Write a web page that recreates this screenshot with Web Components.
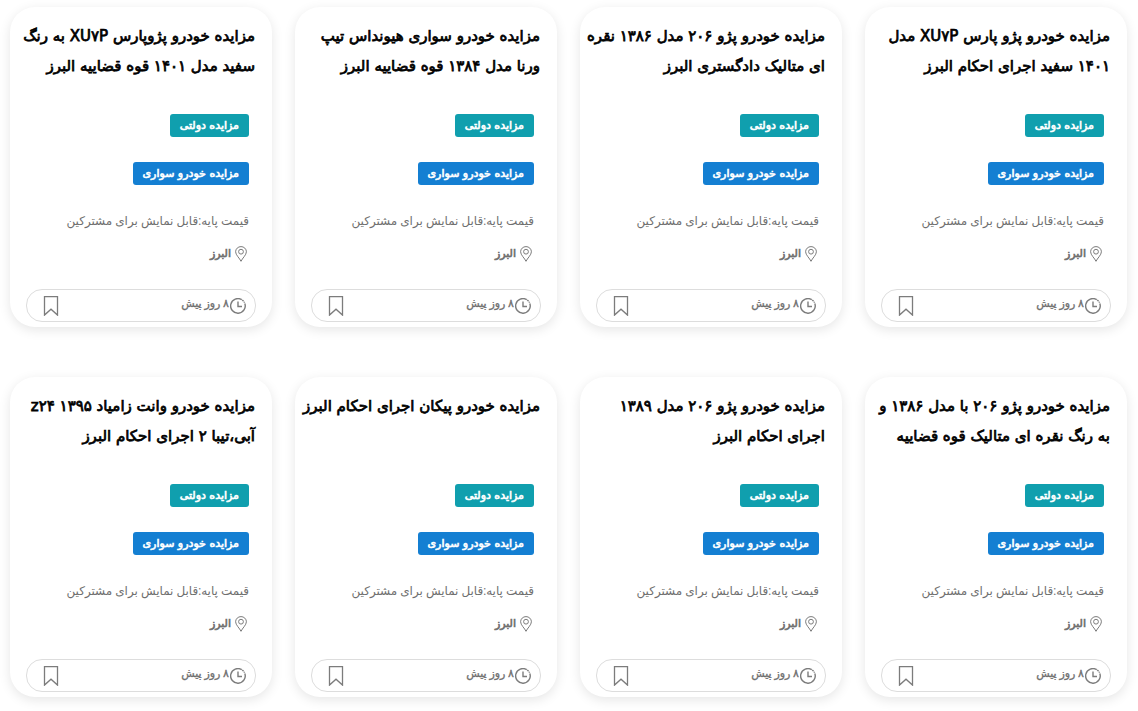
<!DOCTYPE html>
<html lang="fa" dir="rtl">
<head>
<meta charset="utf-8">
<meta name="viewport" content="width=device-width, initial-scale=1">
<title>مزایده خودرو</title>
<style>
body { margin: 0; background: #fff; font-family: Roboto, "DejaVu Sans", sans-serif; }
</style>
</head>
<body>
<auction-grid>
  <auction-card>مزایده خودرو پژو پارس XU۷P مدل<br>۱۴۰۱ سفید اجرای احکام البرز</auction-card>
  <auction-card>مزایده خودرو پژو ۲۰۶ مدل ۱۳۸۶ نقره<br>ای متالیک دادگستری البرز</auction-card>
  <auction-card>مزایده خودرو سواری هیونداس تیپ<br>ورنا مدل ۱۳۸۴ قوه قضاییه البرز</auction-card>
  <auction-card>مزایده خودرو پژوپارس XU۷P به رنگ<br>سفید مدل ۱۴۰۱ قوه قضاییه البرز</auction-card>
  <auction-card>مزایده خودرو پژو ۲۰۶ با مدل ۱۳۸۶ و<br>به رنگ نقره ای متالیک قوه قضاییه</auction-card>
  <auction-card>مزایده خودرو پژو ۲۰۶ مدل ۱۳۸۹<br>اجرای احکام البرز</auction-card>
  <auction-card>مزایده خودرو پیکان اجرای احکام البرز</auction-card>
  <auction-card>مزایده خودرو وانت زامیاد ۱۳۹۵ z۲۴<br>آبی،تیبا ۲ اجرای احکام البرز</auction-card>
</auction-grid>

<template id="grid-template">
  <style>
    :host { display: grid; grid-template-columns: repeat(4, minmax(0, 1fr)); gap: 50px 23px; padding: 7px 11px 14px 10px; }
  </style>
  <slot></slot>
</template>

<template id="tag-template">
  <style>
    :host { display: block; width: fit-content; }
    a { display: block; padding: 0 10px; border-radius: 3px; background: var(--tag-color, #109fae); color: #fff; font-family: "DejaVu Sans", sans-serif; font-size: 11px; -webkit-text-stroke: .06em; line-height: 23px; text-decoration: none; white-space: nowrap; }
  </style>
  <a href="#"><slot></slot></a>
</template>

<template id="card-template">
  <style>
    :host { display: flex; flex-direction: column; box-sizing: border-box; padding: 14px 16px 5px; border-radius: 25px; background: #fff; box-shadow: 0 3px 12px rgba(0, 0, 0, .1); color: #6f6f6f; }
    h3 { min-height: 60px; margin: 0 1px; font-family: "DejaVu Sans", sans-serif; font-size: 15px; font-weight: 400; -webkit-text-stroke: .05em; line-height: 30px; white-space: nowrap; }
    h3 a { color: #000; text-decoration: none; }
    .details { display: flex; flex-direction: column; align-items: flex-start; padding: 33px 7px 0; }
    .tags { display: grid; gap: 25px; }
    auction-tag.car { --tag-color: #147fd2; }
    p { margin: 0; white-space: nowrap; }
    .price { margin-top: 24px; font-size: 12px; line-height: 24px; }
    .place { display: flex; align-items: center; gap: 4px; margin-top: 9px; padding: 0 2px; font-size: 11px; -webkit-text-stroke: .06em; line-height: 24px; }
    footer { display: flex; align-items: center; justify-content: space-between; box-sizing: border-box; height: 33px; margin-top: 23px; padding: 0 9px 0 16px; border: 1px solid #ddd; border-radius: 16px; }
    .time { display: flex; align-items: center; gap: 1px; font-size: 11px; -webkit-text-stroke: .03em; line-height: 24px; }
    .time span { padding-bottom: 4px; }
    button { display: block; padding: 0; border: 0; background: none; color: inherit; }
    svg { display: block; fill: none; stroke: #7c7c7c; }
  </style>
  <h3><a href="#"><slot></slot></a></h3>
  <div class="details">
    <div class="tags">
      <auction-tag>مزایده دولتی</auction-tag>
      <auction-tag class="car">مزایده خودرو سواری</auction-tag>
    </div>
    <p class="price">قیمت پایه:قابل نمایش برای مشترکین</p>
    <p class="place">
      <svg width="12" height="16" viewBox="0 0 12 16" aria-hidden="true"><path d="M6 15.3C4.8 12.4.6 9 .6 5.8a5.4 5.2 0 0 1 10.8 0C11.4 9 7.2 12.4 6 15.3Z"/><circle cx="6" cy="5.7" r="2.4"/></svg>
      <span>البرز</span>
    </p>
  </div>
  <footer>
    <div class="time">
      <svg width="16" height="16" viewBox="0 0 16 16" stroke-width="1.4" aria-hidden="true"><path d="M11.8 1.7A7.3 7.3 0 1 0 14.8 5.4M12.3 2l1.3 1.2M14.1 3.8l.5.9M8 3.5v5h4"/></svg>
      <span>۸ روز پیش</span>
    </div>
    <button type="button" aria-label="نشان کردن">
      <svg width="16" height="20" viewBox="0 0 16 20" stroke-width="1.3"><path d="M1.5.7h13v18.4L8 13.2l-6.5 5.9Z"/></svg>
    </button>
  </footer>
</template>

<script>
function register(name, templateId) {
  customElements.define(name, class extends HTMLElement {
    constructor() {
      super();
      const template = document.getElementById(templateId);
      this.attachShadow({ mode: "open" }).append(template.content.cloneNode(true));
    }
  });
}
register("auction-tag", "tag-template");
register("auction-card", "card-template");
register("auction-grid", "grid-template");
</script>
</body>
</html>
